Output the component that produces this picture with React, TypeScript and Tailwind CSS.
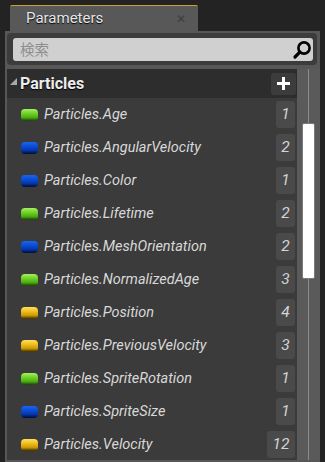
import React from 'react';

type Kind = 'green' | 'blue' | 'yellow';

const params: { name: string; kind: Kind; count: number }[] = [
  { name: 'Particles.Age', kind: 'green', count: 1 },
  { name: 'Particles.AngularVelocity', kind: 'blue', count: 2 },
  { name: 'Particles.Color', kind: 'blue', count: 1 },
  { name: 'Particles.Lifetime', kind: 'green', count: 2 },
  { name: 'Particles.MeshOrientation', kind: 'blue', count: 2 },
  { name: 'Particles.NormalizedAge', kind: 'green', count: 3 },
  { name: 'Particles.Position', kind: 'yellow', count: 4 },
  { name: 'Particles.PreviousVelocity', kind: 'yellow', count: 3 },
  { name: 'Particles.SpriteRotation', kind: 'green', count: 1 },
  { name: 'Particles.SpriteSize', kind: 'blue', count: 1 },
  { name: 'Particles.Velocity', kind: 'yellow', count: 12 },
];

const pillClass: Record<Kind, string> = {
  green:
    'bg-[linear-gradient(to_bottom,#a6f060_0%,#72d428_35%,#4cae14_70%,#1c3c06_100%)]',
  blue: 'bg-[linear-gradient(to_bottom,#1a66f0_0%,#0a4ad0_40%,#0636a8_70%,#020c30_100%)]',
  yellow:
    'bg-[linear-gradient(to_bottom,#ffe060_0%,#f0c020_35%,#cc9a08_70%,#3a2a00_100%)]',
};

function Pill({ kind }: { kind: Kind }) {
  return <div className={`h-[12px] w-[17px] shrink-0 rounded-[4px] ${pillClass[kind]}`} />;
}

function SearchIcon() {
  return (
    <svg width="20" height="20" viewBox="0 0 20 20">
      <circle cx="12" cy="8" r="5.6" fill="none" stroke="#000" strokeWidth="2.6" />
      <path d="M7.8 12.2 L3 17" stroke="#000" strokeWidth="3.2" strokeLinecap="round" />
    </svg>
  );
}

export default function App() {
  return (
    <div className="h-[462px] w-[325px] overflow-hidden bg-[#232323] font-['Roboto','Liberation_Sans',sans-serif]">
      {/* Tab */}
      <div className="flex pl-[10px] pt-[5px]">
        <div className="flex h-[26px] w-[188px] items-center justify-between rounded-t-[2px] border-t border-[#c8a436] bg-[#585858] pl-[16px] pr-[12px]">
          <span className="text-[15px] leading-none text-[#e6e6e6] [text-shadow:0_1px_1px_#000]">
            Parameters
          </span>
          <span className="text-[12px] leading-none text-[#3e3e3e]">✕</span>
        </div>
      </div>

      {/* Panel */}
      <div className="mx-[5px] flex h-[431px] flex-col bg-[#575757] pb-[2px] pl-[2px] pt-[2px]">
        {/* Search */}
        <div className="mr-[3px] flex h-[32px] items-start rounded-[4px] bg-[#3c3c3c] pl-[6px] pr-[4px] pt-[5px]">
          <div className="flex h-[23px] w-full items-center justify-between rounded-[3px] bg-[#d0d0d0] pl-[7px] pr-[1px]">
            <span className="font-['Noto_Sans_CJK_JP',sans-serif] text-[14.5px] leading-none text-[#8e8e8e]">
              検索
            </span>
            <SearchIcon />
          </div>
        </div>

        {/* Body */}
        <div className="mt-[4px] flex min-h-0 flex-1 overflow-hidden">
          <div className="flex w-[290px] shrink-0 flex-col bg-[#3b3b3b]">
            {/* Header */}
            <div className="flex h-[29px] shrink-0 items-center bg-[#2d2d2d] pl-[3px] pr-[1px]">
              <svg width="8" height="8" viewBox="0 0 8 8" className="mb-[3px]">
                <path d="M7 0 L7 7 L0 7 Z" fill="#a8a8a8" />
              </svg>
              <span className="ml-[2px] text-[16px] font-bold leading-none text-[#ececec] [text-shadow:0_1px_1px_#000]">
                Particles
              </span>
              <div className="ml-auto flex h-[22px] w-[25px] items-center justify-center rounded-[3px] bg-[#3c3c3c]">
                <svg width="13" height="13" viewBox="0 0 13 13">
                  <path d="M5 0h3v5h5v3H8v5H5V8H0V5h5z" fill="#fff" />
                </svg>
              </div>
            </div>

            {/* Items */}
            {params.map((p) => (
              <div key={p.name} className="flex h-[33px] shrink-0 items-center pl-[14px] pr-[2px]">
                <Pill kind={p.kind} />
                <span className="ml-[6px] pt-[1px] text-[14.5px] italic leading-none text-[#d8d8d8]">
                  {p.name}
                </span>
                <div
                  className={`ml-auto flex h-[27px] items-center justify-center rounded-[3px] bg-[#4a4a4a] ${
                    p.count > 9 ? 'w-[28px]' : 'w-[19px]'
                  }`}
                >
                  <span className="text-[15.5px] italic leading-none text-[#d4d4d4]">{p.count}</span>
                </div>
              </div>
            ))}
          </div>

          {/* Scrollbar */}
          <div className="relative w-[23px] shrink-0 bg-[#5a5a5a]">
            <div className="absolute bottom-0 left-[11px] top-0 w-px bg-[#8c8c8c]" />
            <div className="absolute left-[5px] top-[54px] h-[156px] w-[13px] rounded-[2px] border border-[#7a7a7a] bg-white" />
          </div>
        </div>
      </div>
    </div>
  );
}
